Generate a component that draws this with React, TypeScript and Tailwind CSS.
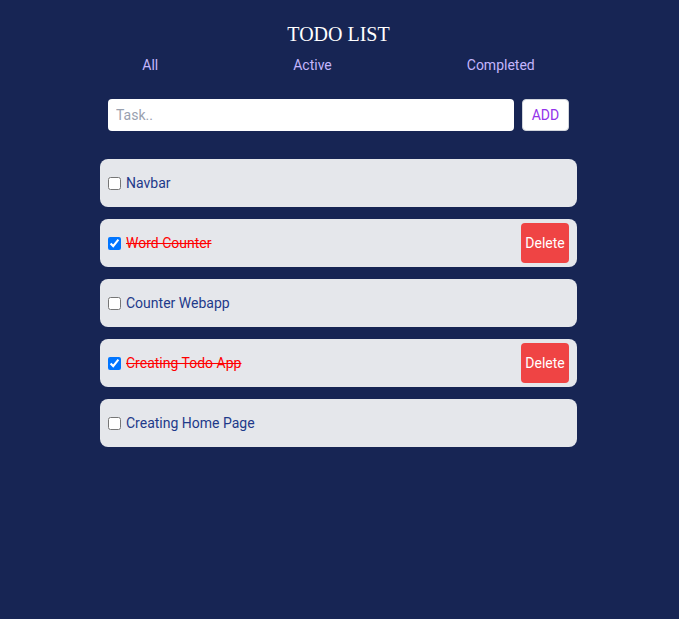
import { useState } from "react";

type Todo = { id: number; text: string; done: boolean };

const initial: Todo[] = [
  { id: 1, text: "Navbar", done: false },
  { id: 2, text: "Word Counter", done: true },
  { id: 3, text: "Counter Webapp", done: false },
  { id: 4, text: "Creating Todo App", done: true },
  { id: 5, text: "Creating Home Page", done: false },
];

function App() {
  const [todos, setTodos] = useState<Todo[]>(initial);
  const [task, setTask] = useState("");

  const toggle = (id: number) =>
    setTodos(todos.map((t) => (t.id === id ? { ...t, done: !t.done } : t)));

  return (
    <div
      className="min-h-screen bg-[#172554] pt-[20px] pr-[2px]"
      style={{ fontFamily: 'Roboto, "Open Sans", sans-serif' }}
    >
      <h1
        className="text-center text-[20px] leading-[28px] text-white"
        style={{ fontFamily: '"Liberation Serif", serif' }}
      >
        TODO LIST
      </h1>

      <div className="mt-[7px] flex justify-center gap-[135px] text-sm leading-5 text-[#c4b5fd]">
        <button>All</button>
        <button>Active</button>
        <button>Completed</button>
      </div>

      <div className="mx-auto mt-[24px] flex w-[461px] gap-2">
        <input
          value={task}
          onChange={(e) => setTask(e.target.value)}
          placeholder="Task.."
          className="h-8 flex-1 rounded-sm bg-white px-2 text-sm text-gray-700 placeholder:text-gray-400 outline-none"
        />
        <button className="h-8 w-[47px] rounded-sm border border-gray-300 bg-white text-sm text-[#9333ea]">
          ADD
        </button>
      </div>

      <div className="mx-auto mt-[28px] flex w-[477px] flex-col gap-3">
        {todos.map((todo) => (
          <div
            key={todo.id}
            className="flex h-12 items-center justify-between rounded-lg bg-[#e5e7eb] px-2"
          >
            <label className="flex items-center gap-[5px] text-sm">
              <input
                type="checkbox"
                checked={todo.done}
                onChange={() => toggle(todo.id)}
                className="m-0 h-[13px] w-[13px]"
              />
              <span className={todo.done ? "text-[#ff0000] line-through" : "text-[#1e3a8a]"}>
                {todo.text}
              </span>
            </label>
            {todo.done && (
              <button className="h-10 w-12 rounded-sm bg-[#ef4444] text-sm text-white">
                Delete
              </button>
            )}
          </div>
        ))}
      </div>
    </div>
  );
}

export default App;
